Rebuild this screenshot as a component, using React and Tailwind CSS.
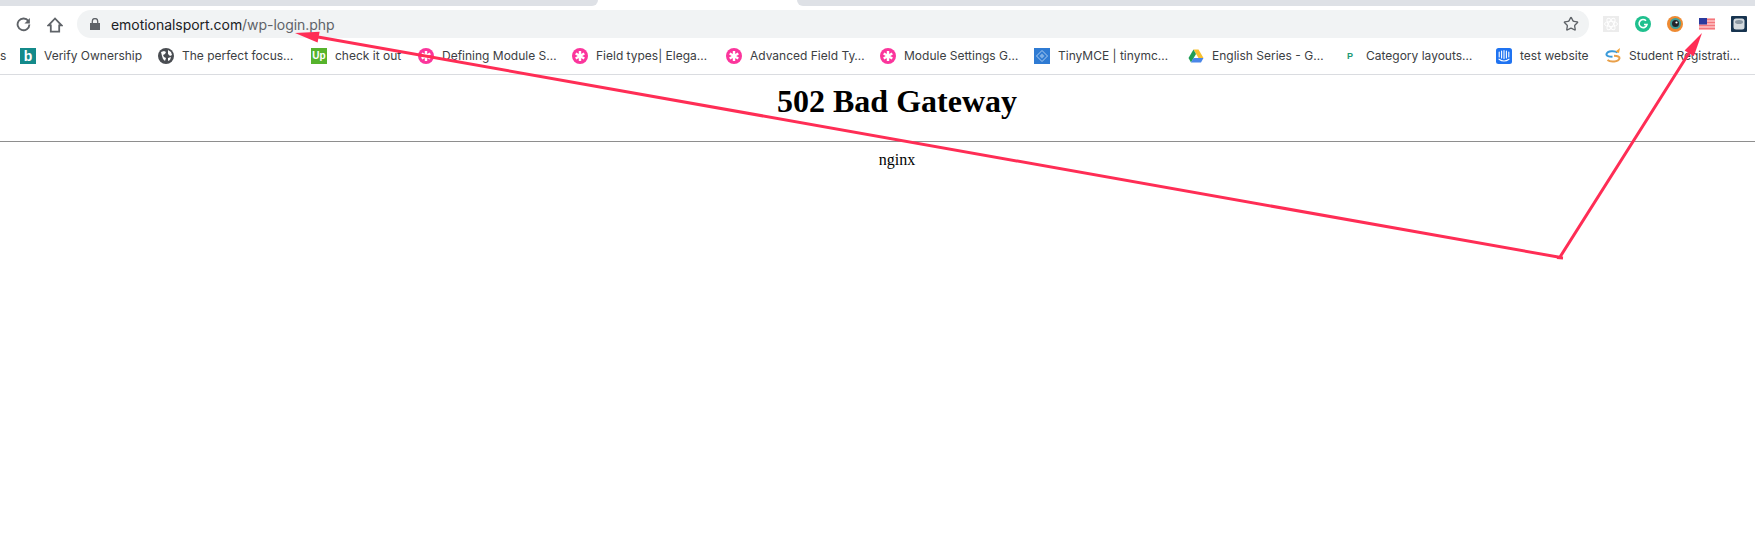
import { Star } from 'lucide-react';

const Pink = () => (
  <svg viewBox="0 0 16 16" className="h-4 w-4">
    <circle cx="8" cy="8" r="8" fill="#fb359c" />
    <path d="M8 3v10M3.700 5.500l8.600 5M12.300 5.500l-8.600 5" stroke="#fff" strokeWidth="2.400" />
  </svg>
);

const Bing = () => (
  <div className="flex h-4 w-4 items-center justify-center bg-[#148a8a] text-[14px] font-bold leading-none text-white font-['Liberation_Sans',sans-serif]">b</div>
);

const Globe = () => (
  <svg viewBox="0 0 16 16" className="h-4 w-4">
    <circle cx="8" cy="8" r="8" fill="#4a4d52" />
    <path d="M3 4l3-1 2 1-1 2-2 1 1 2 2 1-1 3-2-2-1-3zM10 2l3 2 1 3-2 1-2-2zM10 10l3-1-1 3-2 1z" fill="#fff" />
  </svg>
);

const Upwork = () => (
  <div className="flex h-4 w-4 items-center justify-center bg-[#56b32c] text-[10px] font-bold leading-none text-white font-['Liberation_Sans',sans-serif]">Up</div>
);

const Tiny = () => (
  <svg viewBox="0 0 16 16" className="h-4 w-4">
    <rect width="16" height="16" fill="#2f7bd3" />
    <path d="M8 2.500L13.500 8 8 13.500 2.500 8z" fill="none" stroke="#a9cbf0" strokeWidth="1" />
    <path d="M8 5.500L10.500 8 8 10.500 5.500 8z" fill="#7fb0e6" />
  </svg>
);

const Drive = () => (
  <svg viewBox="0 0 16 16" className="h-4 w-4">
    <path d="M5.500 1.500h5L15.500 10h-5z" fill="#f9c02e" />
    <path d="M5.500 1.500L.5 10 3 14.500 8 6z" fill="#1f9d55" />
    <path d="M3 14.500h10l2.500-4.500h-10z" fill="#4a86e8" />
  </svg>
);

const Pressable = () => (
  <div className="flex h-4 w-4 items-center justify-center text-[9px] font-bold leading-none text-[#1d9a74] font-['Liberation_Sans',sans-serif]">P</div>
);

const Intercom = () => (
  <svg viewBox="0 0 16 16" className="h-4 w-4">
    <rect width="16" height="16" rx="2.500" fill="#1f73f1" />
    <path d="M3.200 4v5M5.600 3v7M8 2.600v8M10.400 3v7M12.800 4v5" stroke="#fff" strokeWidth="1.100" strokeLinecap="round" />
    <path d="M3 11.200c3 2.200 7 2.200 10 0" stroke="#fff" strokeWidth="1.100" fill="none" strokeLinecap="round" />
  </svg>
);

const Student = () => (
  <svg viewBox="0 0 16 16" className="h-4 w-4">
    <path d="M12.500 4.500C10 2.500 2.500 2.500 1.500 6c-.5 2 2.500 2.600 6 2.800" stroke="#3a9ad9" strokeWidth="2" fill="none" />
    <path d="M2.500 12c3 2.500 11 2 12-1.800.4-1.600-2-2.200-5.500-2.500" stroke="#e9a04a" strokeWidth="2" fill="none" />
    <path d="M10.500 3.500L15 0l-1 5z" fill="#f2a33a" />
  </svg>
);

const bookmarks = [
  { label: 'Verify Ownership', icon: Bing, width: 'w-[138px]' },
  { label: 'The perfect focus…', icon: Globe, width: 'w-[153px]' },
  { label: 'check it out', icon: Upwork, width: 'w-[107px]' },
  { label: 'Defining Module S…', icon: Pink, width: 'w-[154px]' },
  { label: 'Field types| Elega…', icon: Pink, width: 'w-[154px]' },
  { label: 'Advanced Field Ty…', icon: Pink, width: 'w-[154px]' },
  { label: 'Module Settings G…', icon: Pink, width: 'w-[154px]' },
  { label: 'TinyMCE | tinymc…', icon: Tiny, width: 'w-[154px]' },
  { label: 'English Series - G…', icon: Drive, width: 'w-[154px]' },
  { label: 'Category layouts…', icon: Pressable, width: 'w-[154px]' },
  { label: 'test website', icon: Intercom, width: 'w-[109px]' },
  { label: 'Student Registrati…', icon: Student, width: 'w-[150px]' },
];

const Extensions = () => (
  <div className="ml-[14px] flex items-center gap-4">
    <svg viewBox="0 0 16 16" className="h-4 w-4">
      <rect width="16" height="16" fill="#ececec" />
      <g fill="none" stroke="#fff" strokeWidth="1">
        <ellipse cx="8" cy="8" rx="6.500" ry="2.500" />
        <ellipse cx="8" cy="8" rx="6.500" ry="2.500" transform="rotate(60 8 8)" />
        <ellipse cx="8" cy="8" rx="6.500" ry="2.500" transform="rotate(120 8 8)" />
      </g>
    </svg>
    <svg viewBox="0 0 16 16" className="h-4 w-4">
      <circle cx="8" cy="8" r="8" fill="#1fc08e" />
      <path d="M11 4.800A4 4 0 1 0 12 8.500H9" fill="none" stroke="#fff" strokeWidth="1.600" />
    </svg>
    <svg viewBox="0 0 16 16" className="h-4 w-4">
      <circle cx="8" cy="8" r="8" fill="#ee8a32" />
      <circle cx="8.500" cy="7.500" r="5.500" fill="#3f9e9a" />
      <circle cx="8.500" cy="7.500" r="3.500" fill="#23242a" />
      <circle cx="9.500" cy="6.500" r="1.100" fill="#fff" />
    </svg>
    <svg viewBox="0 0 16 12" className="h-3 w-4">
      <rect width="16" height="12" fill="#fbb0b3" />
      <path d="M0 1.500h16M0 4.500h16M0 7.500h16M0 10.500h16" stroke="#f4777d" strokeWidth="1" />
      <rect width="8" height="6.500" fill="#2b3a9e" />
    </svg>
    <svg viewBox="0 0 16 16" className="h-4 w-4">
      <rect width="16" height="16" rx="1" fill="#17344f" />
      <rect x="2.500" y="2.500" width="11" height="11" rx="2.500" fill="#d5dbdf" />
      <ellipse cx="8" cy="6" rx="4" ry="2" fill="#8b98a3" />
    </svg>
  </div>
);

export default function App() {
  return (
    <div className="relative h-[551px] w-full overflow-hidden bg-white">
      <div className="flex h-1.5 bg-white">
        <div className="w-[598px] rounded-br-md bg-[#dee1e6]" />
        <div className="w-[199px]" />
        <div className="flex-1 rounded-bl-md bg-[#dee1e6]" />
      </div>

      <div className="flex h-8 items-end">
        <button className="mb-[6px] ml-4">
          <svg viewBox="0 0 16 16" className="h-[15px] w-[15px]" fill="none" stroke="#5f6368" strokeWidth="2">
            <path d="M13.200 4.300A6.300 6.300 0 1 0 14.300 8" />
            <path d="M14.800 1v5.800H9z" fill="#5f6368" stroke="none" />
          </svg>
        </button>
        <button className="mb-[5px] ml-[16px]">
          <svg viewBox="0 0 16 16" className="h-4 w-4" fill="none" stroke="#5f6368" strokeWidth="1.800">
            <path d="M8 1.500L1.500 8.300h2.300v6.400h8.400V8.300h2.300z" />
          </svg>
        </button>
        <div className="ml-[14px] flex h-7 w-[1512px] items-center rounded-full bg-[#f1f3f4] pl-[13px] pr-[10px]">
          <svg viewBox="0 0 10 12" className="h-3 w-2.5" fill="#5f6368">
            <path d="M0 5h10v7H0z" />
            <path d="M2.300 5V3.200a2.700 2.700 0 0 1 5.400 0V5" fill="none" stroke="#5f6368" strokeWidth="1.300" />
          </svg>
          <span className="ml-[11px] text-[14px] tracking-[-0.04px] text-[#202124] font-['Inter',sans-serif]">
            emotionalsport.com<span className="text-[#5f6368]">/wp-login.php</span>
          </span>
          <Star className="ml-auto h-4 w-4 text-[#5f6368]" strokeWidth={2} />
        </div>
        <div className="mb-[6px]">
          <Extensions />
        </div>
      </div>

      <div className="flex h-[37px] items-center border-b border-[#dadce0] pl-5 text-[12px] text-[#3c4043] font-['Inter',sans-serif]">
        <span className="absolute left-0">s</span>
        {bookmarks.map((b) => {
          const Icon = b.icon;
          return (
            <div key={b.label} className={`flex shrink-0 items-center gap-2 whitespace-nowrap ${b.width}`}>
              <Icon />
              <span>{b.label}</span>
            </div>
          );
        })}
      </div>

      <div className="w-[1794px] pt-2 text-center text-black font-['Liberation_Serif',serif]">
        <h1 className="text-[32px] font-bold leading-[37px]">502 Bad Gateway</h1>
        <div className="mt-[21px] h-px w-full bg-[#8e8e8e]" />
        <p className="mt-[9px] text-[16px] leading-[18px]">nginx</p>
      </div>

      {/* annotation arrows drawn over the screenshot */}
      <svg className="pointer-events-none absolute inset-0" width="1755" height="551" viewBox="0 0 1755 551">
        <path d="M1561 257.500L318 37M1560 257L1689 53" fill="none" stroke="#ff2d55" strokeWidth="3" />
        <path d="M1557 257.500l6 .500" stroke="#ff2d55" strokeWidth="3" />
        <path d="M295 33L319.600 31.800 317.600 42.600z" fill="#ff2d55" />
        <path d="M1702 33L1693.800 56.200 1684.600 50.400z" fill="#ff2d55" />
      </svg>
    </div>
  );
}
